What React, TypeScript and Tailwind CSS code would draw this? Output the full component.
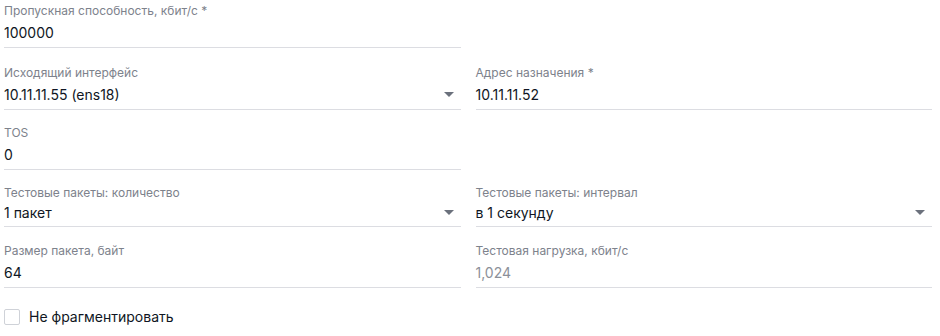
import React from 'react';

type FieldProps = {
  label?: string;
  value?: string;
  select?: boolean;
  disabled?: boolean;
  compact?: boolean;
};

function Caret() {
  return (
    <svg width="10" height="5" viewBox="0 0 10 5" className="shrink-0">
      <path d="M0 0 L10 0 L5 5 Z" fill="#6b717c" />
    </svg>
  );
}

function Field({ label, value, select, disabled, compact }: FieldProps) {
  if (!label) return <div />;
  return (
    <div className={compact ? 'flex flex-col border-b border-[#dcdde2] pb-[3px]' : 'flex flex-col border-b border-[#dcdde2] pb-[2px]'}>
      <div className="text-[12px] leading-[16px] text-[#7d828c]">{label}</div>
      <div className={compact ? 'flex items-center justify-between h-[22px] pr-[7px]' : 'flex items-center justify-between h-[26px] pr-[7px]'}>
        <span className={disabled ? 'text-[14px] text-[#8c9099]' : 'text-[14px] text-[#0f1623]'}>{value}</span>
        {select && <Caret />}
      </div>
    </div>
  );
}

export default function App() {
  return (
    <div className="w-[940px] h-[336px] bg-white pl-[4px] pr-[8px] pt-[3px] font-['Inter',sans-serif]">
      <div className="grid grid-cols-2 gap-x-[15px]">
        <Field label="Пропускная способность, кбит/с *" value="100000" />
        <Field />
      </div>
      <div className="grid grid-cols-2 gap-x-[15px] mt-[17px]">
        <Field label="Исходящий интерфейс" value="10.11.11.55 (ens18)" select />
        <Field label="Адрес назначения *" value="10.11.11.52" />
      </div>
      <div className="grid grid-cols-2 gap-x-[15px] mt-[15px]">
        <Field label="TOS" value="0" />
        <Field />
      </div>
      <div className="grid grid-cols-2 gap-x-[15px] mt-[15px]">
        <Field label="Тестовые пакеты: количество" value="1 пакет" select compact />
        <Field label="Тестовые пакеты: интервал" value="в 1 секунду" select compact />
      </div>
      <div className="grid grid-cols-2 gap-x-[15px] mt-[16px]">
        <Field label="Размер пакета, байт" value="64" />
        <Field label="Тестовая нагрузка, кбит/с" value="1,024" disabled />
      </div>
      <label className="flex items-center gap-[9px] mt-[18px]">
        <span className="w-[16px] h-[16px] border border-[#cfd2d8] rounded-[2px] bg-white" />
        <span className="text-[14px] text-[#0f1623]">Не фрагментировать</span>
      </label>
    </div>
  );
}
